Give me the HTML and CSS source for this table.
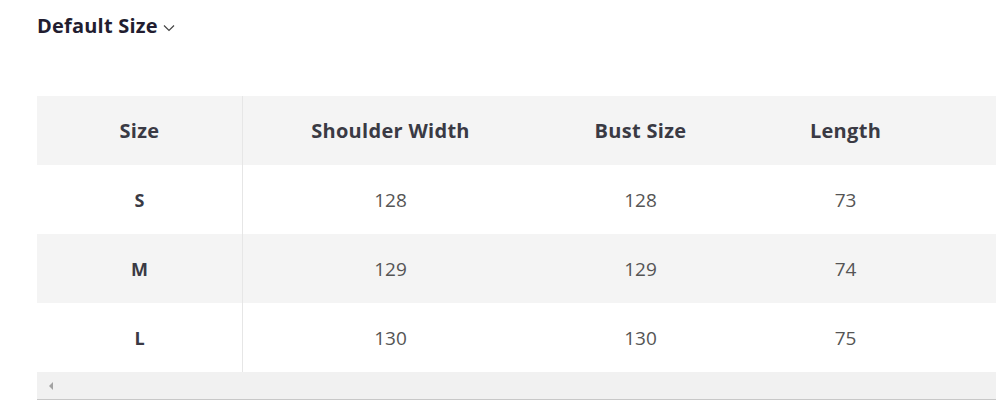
FILE: index.html
```html
<!DOCTYPE html>
<html>
<head>
<meta charset="utf-8">
<link rel="stylesheet" href="styles.css">
</head>
<body>
<div class="page">
  <div class="title">Default Size <svg class="chev" width="12" height="8" viewBox="0 0 12 8"><path d="M1 1.5 L6 6.5 L11 1.5" fill="none" stroke="#444" stroke-width="1.2"/></svg></div>
  <div class="tablewrap">
    <table class="sizes">
      <thead>
        <tr><th class="c1">Size</th><th class="c2">Shoulder Width</th><th class="c3">Bust Size</th><th class="c3">Length</th><th class="c4"></th></tr>
      </thead>
      <tbody>
        <tr class="odd"><td class="c1 lbl">S</td><td>128</td><td>128</td><td>73</td><td></td></tr>
        <tr class="even"><td class="c1 lbl">M</td><td>129</td><td>129</td><td>74</td><td></td></tr>
        <tr class="odd"><td class="c1 lbl">L</td><td>130</td><td>130</td><td>75</td><td></td></tr>
      </tbody>
    </table>
    <div class="scrollbar"><span class="arrow"></span></div>
  </div>
</div>
</body>
</html>
```
FILE: styles.css
```css
html, body { margin: 0; padding: 0; background: #fff; }
body { font-family: "Open Sans", "Noto Sans", sans-serif; color: #333; width: 996px; height: 401px; overflow: hidden; }
.page { padding: 13px 0 0 37px; }
.title { font-size: 20px; font-weight: 700; color: #221d30; height: 26px; line-height: 26px; display: flex; align-items: center; gap: 5px; letter-spacing: 0.2px; }
.chev { margin-top: 4px; }
.tablewrap { margin-top: 57px; width: 959px; overflow: hidden; border-bottom: 1px solid #c8c8c8; }
.sizes { border-collapse: collapse; table-layout: fixed; width: 1100px; }
.sizes th, .sizes td { text-align: center; padding: 0; height: 69px; }
.sizes th { font-weight: 700; font-size: 20px; color: #3a3a44; background: #f4f4f4; letter-spacing: 0.3px; }
.sizes td { font-size: 19px; color: #555; }
.sizes td.lbl { font-weight: 700; color: #3a3a44; font-size: 18px; }
.c1 { width: 205px; border-right: 1px solid #e6e6e6; }
.c2 { width: 295px; }
.c3 { width: 205px; }
.c4 { width: 190px; }
tr.even td { background: #f4f4f4; }
.scrollbar { height: 27px; background: #f1f1f1; position: relative; }
.arrow { position: absolute; left: 12px; top: 10px; width: 0; height: 0; border-top: 4px solid transparent; border-bottom: 4px solid transparent; border-right: 4px solid #a3a3a3; }
```
